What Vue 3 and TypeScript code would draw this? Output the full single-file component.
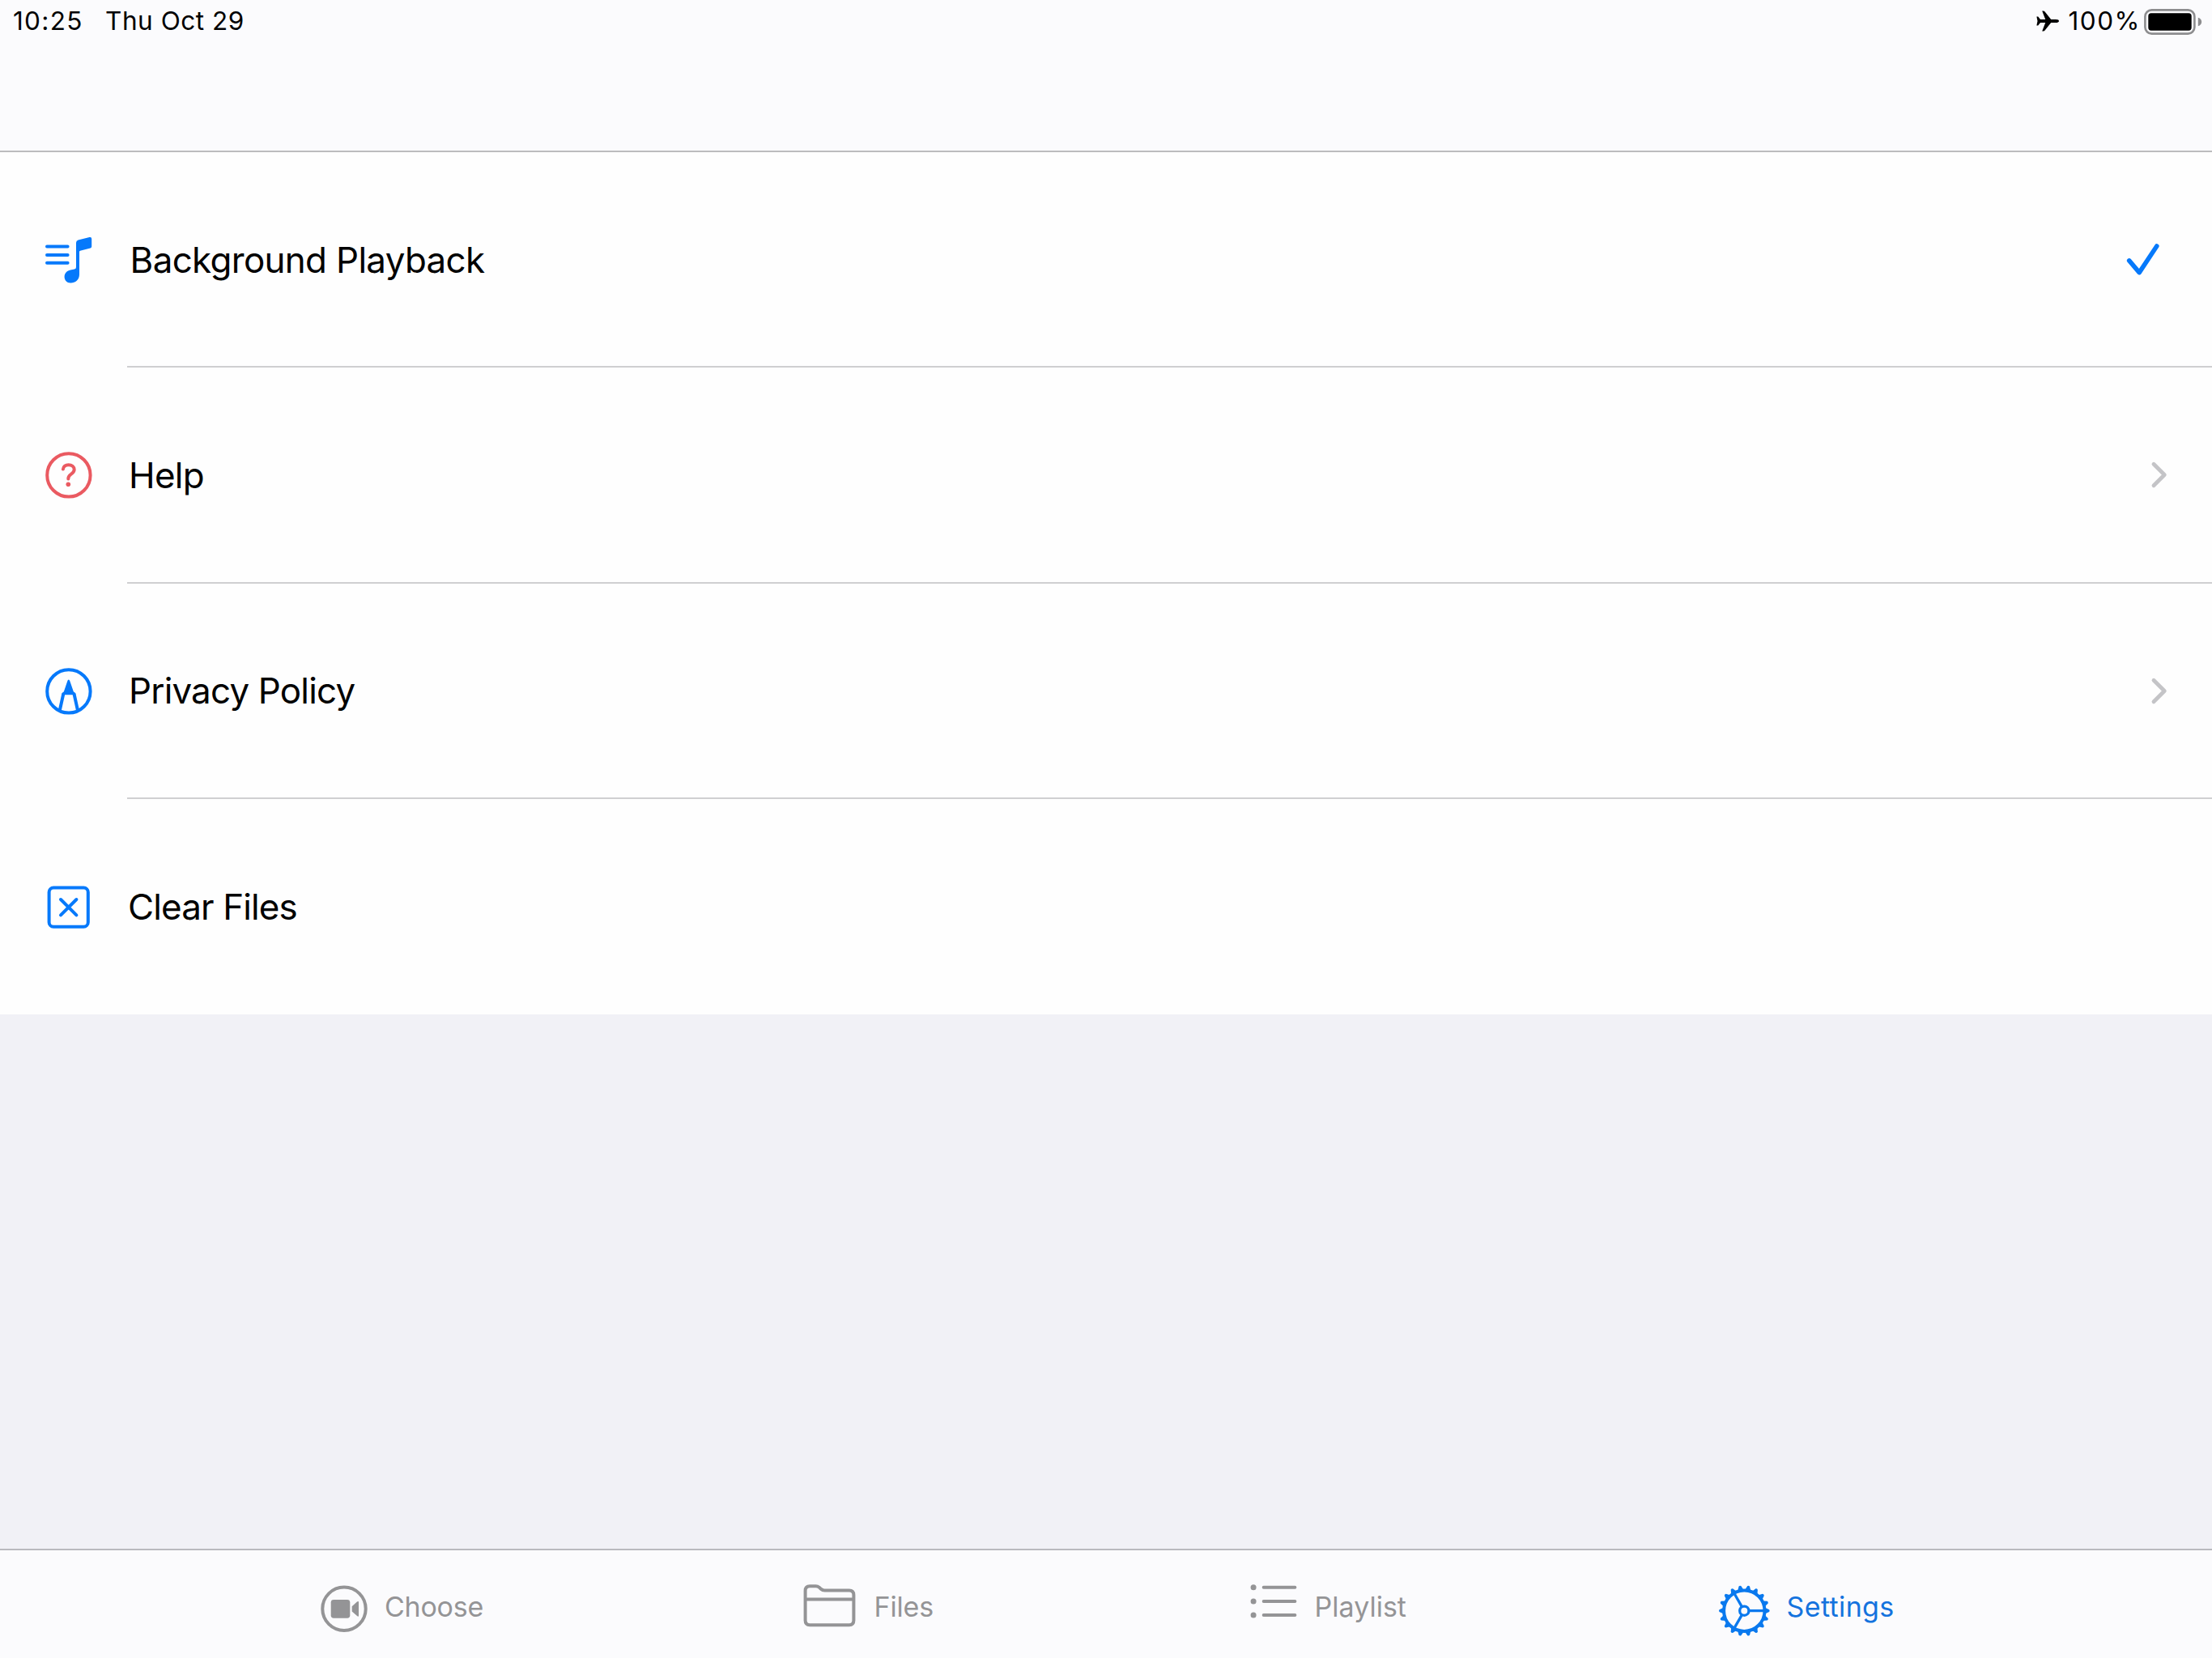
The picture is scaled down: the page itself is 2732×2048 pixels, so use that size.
<script setup lang="ts">
interface Row {
  id: 'playback' | 'help' | 'privacy' | 'clear'
  label: string
  accessory: 'check' | 'chevron' | 'none'
  inset: number
  tracking: number
}

interface Tab {
  id: 'choose' | 'files' | 'playlist' | 'settings'
  label: string
  active: boolean
  inset: number
  tracking: number
}

const rows: Row[] = [
  { id: 'playback', label: 'Background Playback', accessory: 'check', inset: 43.6, tracking: -0.66 },
  { id: 'help', label: 'Help', accessory: 'chevron', inset: 42, tracking: -0.7 },
  { id: 'privacy', label: 'Privacy Policy', accessory: 'chevron', inset: 42, tracking: -0.8 },
  { id: 'clear', label: 'Clear Files', accessory: 'none', inset: 41.1, tracking: -0.85 },
]

const tabs: Tab[] = [
  { id: 'choose', label: 'Choose', active: false, inset: 18, tracking: -0.25 },
  { id: 'files', label: 'Files', active: false, inset: 23.6, tracking: -0.2 },
  { id: 'playlist', label: 'Playlist', active: false, inset: 17.6, tracking: 0 },
  { id: 'settings', label: 'Settings', active: true, inset: 19.6, tracking: 0.35 },
]

const teeth: number[] = Array.from({ length: 18 }, (_, i) => i * 20)
const spokes: number[] = [0, 120, 240]
</script>

<template>
  <div class="screen">
    <header class="top">
      <div class="status">
        <span class="time">10:25</span>
        <span class="date">Thu Oct 29</span>
        <span class="spacer"></span>
        <svg class="plane" width="28" height="26" viewBox="0 0 28 26">
          <path d="M28 13C28 11.7 26.3 11 24.2 11H18.2L10.4 1.2Q9.8 .4 8.8 .4H7.2L11.2 11H5L2.2 7.6H.4L1.5 13L.4 18.4H2.2L5 15H11.2L7.2 25.6H8.8Q9.8 25.6 10.4 24.8L18.2 15H24.2C26.3 15 28 14.3 28 13Z" />
        </svg>
        <span class="percent">100%</span>
        <svg class="battery" width="72" height="32" viewBox="0 0 72 32">
          <rect x="1.4" y="1.4" width="61" height="29.2" rx="8" fill="none" stroke="#8d8d8f" stroke-width="2.6" />
          <rect x="5.3" y="5.3" width="53.4" height="21.4" rx="3.6" />
          <path d="M66.8 10.8C69.6 11.6 71.2 13.6 71.2 16S69.6 20.4 66.8 21.2Z" fill="#8d8d8f" />
        </svg>
      </div>
    </header>

    <main class="list">
      <div v-for="row in rows" :key="row.id" class="row">
        <svg v-if="row.id === 'playback'" class="icon" viewBox="0 0 64 64">
          <path class="line" d="M5 16.6H30.6M5 26.9H30.6M5 36.7H30.6" />
          <path fill="currentColor" d="M41 12Q41 9.4 43.5 8.6L57.5 5.1Q60.2 4.5 60.2 6.9V16.5Q60.2 18.2 58.6 18.6L46 21.7Q45 22 45 23V51C45 57.5 40 61.5 34.3 61.5C29.5 61.5 26.6 58 26.6 54C26.6 49.5 30 46.5 34 45.6L39 44.6Q41 44.2 41 42Z" />
        </svg>
        <svg v-else-if="row.id === 'help'" class="icon red" viewBox="0 0 64 64">
          <circle class="line" cx="31.9" cy="32.9" r="26.7" />
          <path class="line" d="M24.9 25.6C25.2 22.2 27.9 20.2 31.6 20.2C35.7 20.2 38.7 22.5 38.7 26.1C38.7 29.1 36.8 30.5 34.6 31.9C32.2 33.5 31.3 34.6 31.3 37.4" />
          <circle cx="31.3" cy="44.2" r="2.8" fill="currentColor" />
        </svg>
        <svg v-else-if="row.id === 'privacy'" class="icon" viewBox="0 0 64 64">
          <circle class="line" cx="31.9" cy="32.9" r="26.7" />
          <path class="line" d="M25.2 36.5L20.8 56.5M38.6 36.5L43 56.5" />
          <path fill="currentColor" d="M31.8 18.6Q32.8 18.6 33.4 20.4L37.8 33.2L40.2 35.2V37.3H23.6V35.2L25.9 33.2L30.2 20.4Q30.8 18.6 31.8 18.6Z" />
        </svg>
        <svg v-else class="icon" viewBox="0 0 64 64">
          <rect class="line" x="7.6" y="9.6" width="48.2" height="48.2" rx="5.5" />
          <path class="line" d="M22 24L41.4 43.4M41.4 24L22 43.4" />
        </svg>
        <div class="cell">
          <span class="label" :style="{ paddingLeft: row.inset + 'px', letterSpacing: row.tracking + 'px' }">{{ row.label }}</span>
        </div>
        <svg v-if="row.accessory === 'check'" class="check" width="44" height="44" viewBox="0 0 44 44">
          <path d="M4.7 23.9L17.2 38.6L38.8 6" />
        </svg>
        <svg v-else-if="row.accessory === 'chevron'" class="chevron" width="24" height="40" viewBox="0 0 24 40">
          <path d="M5 7.2L18.3 20.5L5 33.8" />
        </svg>
      </div>
    </main>

    <nav class="tabs">
      <div v-for="tab in tabs" :key="tab.id" class="tab" :class="{ active: tab.active }">
        <svg v-if="tab.id === 'choose'" class="icon" viewBox="0 0 64 64">
          <circle class="line" cx="32" cy="30.3" r="26.7" />
          <rect x="15.7" y="19" width="23.6" height="22.7" rx="3.4" fill="currentColor" />
          <path fill="currentColor" d="M41.7 27.2L48 21.6Q50 20.2 50 22.4V38.4Q50 40.6 48 39.1L41.7 33.6Z" />
        </svg>
        <svg v-else-if="tab.id === 'files'" class="icon" viewBox="0 0 64 64">
          <path class="line" d="M2.6 8Q2.6 2.3 8.2 2.3H15.6Q18 2.3 19.8 3.8L22.2 5.9Q24 7.4 26.4 7.4H56.8Q62.4 7.4 62.4 13V44.6Q62.4 50.2 56.8 50.2H8.2Q2.6 50.2 2.6 44.6ZM2.6 18.4H62.4" />
        </svg>
        <svg v-else-if="tab.id === 'playlist'" class="icon" viewBox="0 0 64 64">
          <g fill="currentColor">
            <circle cx="6.1" cy="3.8" r="3.5" />
            <circle cx="6.1" cy="20.9" r="3.5" />
            <circle cx="6.1" cy="38.1" r="3.5" />
          </g>
          <path class="line" d="M18.7 3.8H57.4M18.7 20.9H57.4M18.7 38.1H57.4" />
        </svg>
        <svg v-else class="icon" viewBox="0 0 64 64">
          <g transform="translate(31.3 32.7)">
            <circle class="line" r="25.2" />
            <circle class="line thin" r="5.6" />
            <path v-for="a in spokes" :key="'s' + a" class="line thin" d="M6.5 0H25" :transform="`rotate(${a})`" />
            <path v-for="a in teeth" :key="'t' + a" fill="currentColor" d="M26 -3.6L30.8 -1.4Q31.8 0 30.8 1.4L26 3.6Z" :transform="`rotate(${a})`" />
          </g>
        </svg>
        <span class="caption" :style="{ marginLeft: tab.inset + 'px', letterSpacing: tab.tracking + 'px' }">{{ tab.label }}</span>
      </div>
    </nav>
  </div>
</template>

<style>
body {
  margin: 0;
  background: #f1f1f6;
}
</style>

<style scoped>
.screen {
  display: flex;
  flex-direction: column;
  width: 2732px;
  height: 2048px;
  overflow: hidden;
  background: #f1f1f6;
  color: #000;
  font-family: Inter, "Liberation Sans", sans-serif;
}

.top {
  box-sizing: border-box;
  flex: none;
  height: 188px;
  background: #fbfbfd;
  border-bottom: 2px solid #bcbcbe;
}

.status {
  display: flex;
  align-items: center;
  height: 52px;
  padding: 0 12px 0 16px;
  font-size: 31.5px;
  line-height: 52px;
  white-space: nowrap;
}

.time {
  width: 114px;
  letter-spacing: 1.3px;
}

.date {
  letter-spacing: 0.55px;
}

.spacer {
  flex: 1;
}

.plane {
  margin-right: 12px;
}

.percent {
  width: 93.5px;
  letter-spacing: 1.5px;
}

.battery {
  margin-top: 2px;
}

.list {
  flex: none;
  background: #fefefe;
}

.row {
  display: flex;
  align-items: center;
  box-sizing: border-box;
  height: 266.3px;
  padding: 0 0 2px 53px;
  color: #0679fb;
}

.row:not(:last-child) {
  background: linear-gradient(#cfcfd1, #cfcfd1) 157px 100% / 2575px 2px no-repeat;
}

.icon {
  flex: none;
  width: 64px;
  height: 64px;
  overflow: visible;
}

.red {
  color: #ea5a61;
}

.line {
  fill: none;
  stroke: currentColor;
  stroke-width: 4;
  stroke-linecap: round;
  stroke-linejoin: round;
}

.thin {
  stroke-width: 3.3;
}

.cell {
  flex: 1;
  padding-top: 1.4px;
}

.label {
  display: block;
  color: #000;
  font-size: 43.9px;
  line-height: 60px;
  white-space: nowrap;
}

.check {
  margin-right: 63px;
  fill: none;
  stroke: #0679fb;
  stroke-width: 5.6;
  stroke-linecap: round;
  stroke-linejoin: round;
}

.chevron {
  margin-right: 53px;
  fill: none;
  stroke: #c4c4c7;
  stroke-width: 4.8;
  stroke-linecap: round;
  stroke-linejoin: round;
}

.tabs {
  display: grid;
  grid-template-columns: 599px 550px 581px 1fr;
  box-sizing: border-box;
  height: 135px;
  margin-top: auto;
  padding: 42px 0 0 393px;
  background: #fbfbfd;
  border-top: 2px solid #b9b9be;
}

.tab {
  display: flex;
  align-items: flex-start;
  color: #949496;
}

.tab.active {
  color: #0a79ee;
}

.caption {
  font-size: 34px;
  line-height: 56px;
  white-space: nowrap;
}

.active .caption {
  color: #1473de;
}
</style>
